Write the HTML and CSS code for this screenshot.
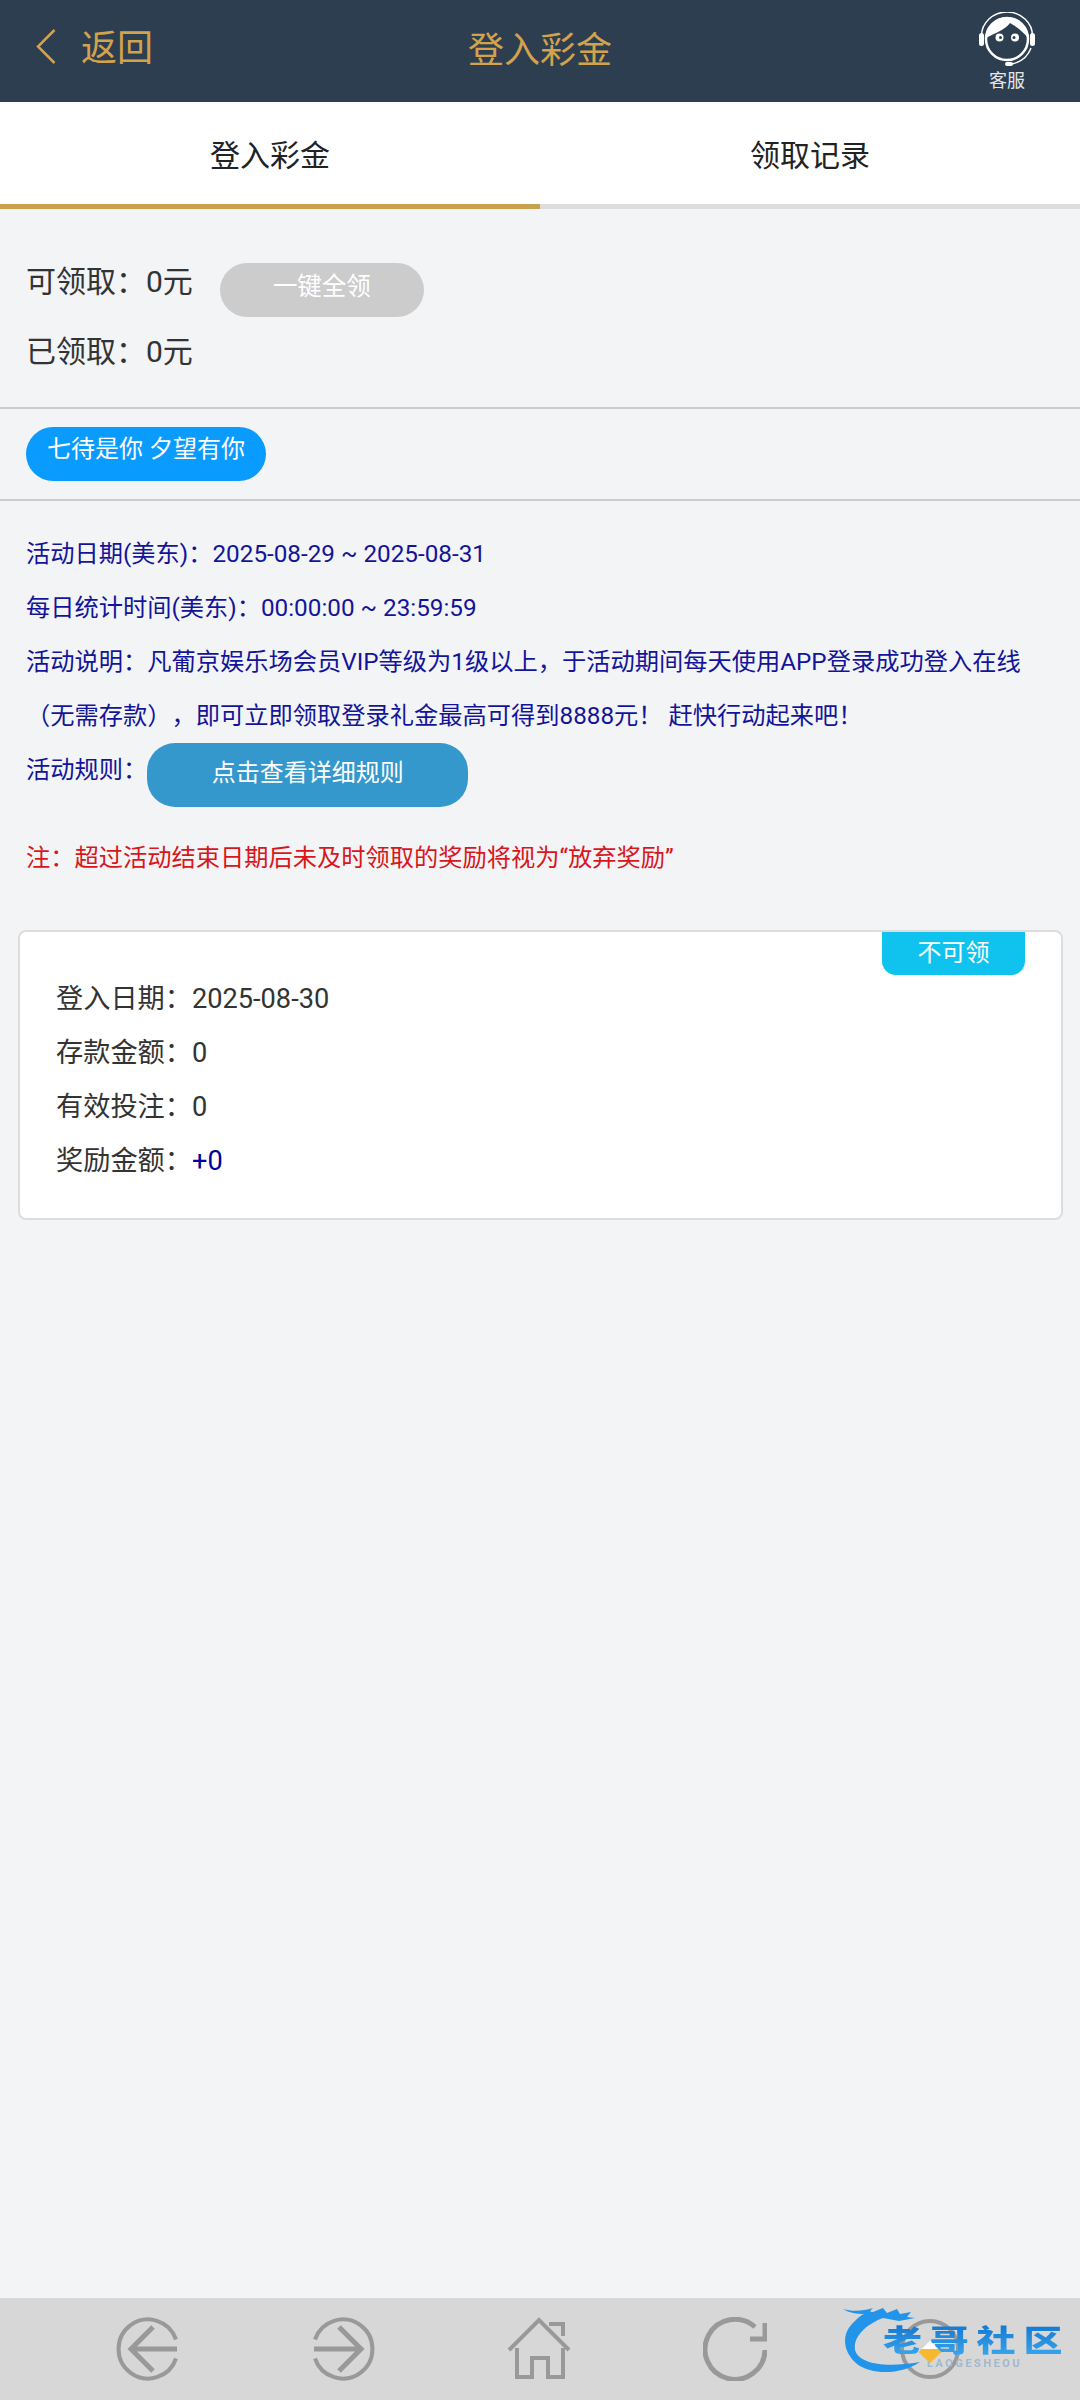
FILE: index.html
```html
<!DOCTYPE html>
<html lang="zh-CN">

<head>
    <meta charset="UTF-8">
    <meta name="viewport" content="width=device-width, initial-scale=1.0">
    <title>登入彩金</title>
    <link rel="stylesheet" href="styles.css">
</head>

<body>
    <header class="top-bar">
        <a class="back-link">
            <svg class="back-icon" viewBox="0 0 20 35">
                <path d="M18.500 1 L2 17.500 L18.500 34" />
            </svg>
            <span>返回</span>
        </a>
        <h1 class="page-title">登入彩金</h1>
        <a class="service-link">
            <svg class="service-icon" viewBox="0 0 56 56">
                <path class="thin" d="M2.500 24 A25.500 24 0 0 1 53.500 24" />
                <rect class="solid" x="0" y="21" width="5" height="13" rx="2.500" />
                <rect class="solid" x="51" y="21" width="5" height="13" rx="2.500" />
                <path class="solid" d="M7 26 A21 21 0 0 1 49 26 C44 20 38 15 31 11 C26 18 16 21 7 26 Z" />
                <circle class="ring" cx="28" cy="27" r="21" />
                <circle class="solid" cx="20.500" cy="25.500" r="4" />
                <circle class="solid" cx="36" cy="25.500" r="4" />
                <circle class="dark" cx="21.500" cy="25.500" r="1.500" />
                <circle class="dark" cx="35" cy="25.500" r="1.500" />
                <path class="thin" d="M52 36 C49 44 42 50 33 52" />
                <rect class="solid" x="26" y="50" width="8" height="4" rx="2" />
            </svg>
            <span>客服</span>
        </a>
    </header>

    <nav class="tabs">
        <a class="tab tab-active">登入彩金</a>
        <a class="tab">领取记录</a>
    </nav>

    <section class="summary">
        <div class="summary-row">
            <span>可领取：0元</span>
            <button class="claim-btn" type="button">一键全领</button>
        </div>
        <div class="summary-row">
            <span>已领取：0元</span>
        </div>
    </section>

    <section class="promo">
        <span class="promo-pill">七待是你 夕望有你</span>
    </section>

    <section class="info">
        <p>活动日期(美东)：2025-08-29 ~ 2025-08-31</p>
        <p>每日统计时间(美东)：00:00:00 ~ 23:59:59</p>
        <p>活动说明：凡葡京娱乐场会员VIP等级为1级以上，于活动期间每天使用APP登录成功登入在线（无需存款），即可立即领取登录礼金最高可得到8888元！ 赶快行动起来吧！</p>
        <div class="rule-row">
            <span>活动规则：</span>
            <button class="rule-btn" type="button">点击查看详细规则</button>
        </div>
        <p class="notice">注：超过活动结束日期后未及时领取的奖励将视为“放弃奖励”</p>
    </section>

    <section class="record-card">
        <span class="record-badge">不可领</span>
        <p>登入日期：2025-08-30</p>
        <p>存款金额：0</p>
        <p>有效投注：0</p>
        <p>奖励金额：<span class="bonus">+0</span></p>
    </section>

    <footer class="bottom-bar">
        <svg class="nav-icon" viewBox="0 0 64 64">
            <path d="M60 22.500 A29.500 29.500 0 1 0 60 41.500" />
            <path class="heavy" d="M37 10 L15 32 L37 54 M15 32 H61" />
        </svg>
        <svg class="nav-icon" viewBox="0 0 64 64">
            <path d="M4 22.500 A29.500 29.500 0 1 1 4 41.500" />
            <path class="heavy" d="M28 10 L50 32 L28 54 M50 32 H3" />
        </svg>
        <svg class="nav-icon" viewBox="0 0 64 64">
            <path d="M2 33 L32 3 L62 33 M42 7 H56 V19" />
            <path d="M10 31 V60 H25 V41 H41 V60 H56 V31" />
        </svg>
        <svg class="nav-icon" viewBox="0 0 64 64">
            <path class="heavy" d="M62 33 A30 30 0 1 1 52 10" />
            <path class="heavy" d="M62 6 V22 H47" />
        </svg>
        <svg class="nav-icon" viewBox="0 0 64 64">
            <circle cx="32" cy="32" r="28" />
        </svg>

        <div class="watermark">
            <svg class="watermark-dragon" viewBox="0 0 90 70">
                <path d="M0 3 C10 6 20 5 30 2 C27 5 26 6 30 6 L40 2 L44 7 L54 3 L57 8 L68 6 L64 11 L72 12 L56 15 L40 12 C24 18 10 30 12 44 C16 58 42 62 77 56 C60 68 30 70 14 58 C0 46 -3 28 12 15 C16 11 18 9 21 8 C14 8 6 7 0 3 Z" />
            </svg>
            <span class="watermark-name">老哥社区</span>
            <span class="watermark-sub">LAOGESHEOU</span>
            <span class="watermark-spark"></span>
        </div>
    </footer>
</body>

</html>
```

FILE: styles.css
```css
* {
    box-sizing: border-box;
}

body {
    margin: 0;
    width: 1080px;
    min-height: 2400px;
    display: flex;
    flex-direction: column;
    font-family: Roboto, "Noto Sans CJK SC", sans-serif;
    text-spacing-trim: space-all;
    background-color: #f2f4f6;
    color: #333;
}

p {
    margin: 0;
}

button {
    border: none;
    color: #fff;
    font-family: inherit;
    font-size: 24px;
}

/* top bar */
.top-bar {
    height: 102px;
    display: grid;
    grid-template-columns: 1fr auto 1fr;
    background-color: #2c3e50;
    color: #d2a24c;
}

.back-link {
    height: 90px;
    padding-left: 36px;
    display: flex;
    align-items: center;
    gap: 25px;
    font-size: 36px;
}

.back-icon {
    width: 20px;
    height: 35px;
    margin-top: 2px;
    fill: none;
    stroke: #d2a24c;
    stroke-width: 2.5;
}

.page-title {
    margin: 0;
    font-size: 36px;
    font-weight: 400;
    line-height: 102px;
}

.service-link {
    justify-self: end;
    padding: 12px 45px 0 0;
    display: flex;
    flex-direction: column;
    align-items: center;
    color: #e4e6e8;
    font-size: 18px;
    line-height: 26px;
}

.service-icon {
    width: 56px;
    height: 56px;
}

.service-icon .thin {
    fill: none;
    stroke: #fff;
    stroke-width: 1.5;
}

.service-icon .ring {
    fill: none;
    stroke: #fff;
    stroke-width: 2.5;
}

.service-icon .solid {
    fill: #fff;
}

.service-icon .dark {
    fill: #2c3e50;
}

/* tabs */
.tabs {
    display: flex;
    background-color: #fff;
}

.tab {
    flex: 1;
    height: 107px;
    border-bottom: 5px solid #ddd;
    color: #222;
    font-size: 30px;
    line-height: 108px;
    text-align: center;
}

.tab-active {
    border-bottom-color: #c9a04d;
}

/* claim summary */
.summary {
    padding: 38px 26px 20px;
    border-bottom: 2px solid #ccc;
    font-size: 30px;
}

.summary-row {
    display: flex;
    align-items: flex-start;
    line-height: 70px;
}

.claim-btn {
    width: 204px;
    height: 54px;
    margin: 16px 0 0 27px;
    padding: 0 0 12px;
    border-radius: 27px;
    background-color: #ccc;
    font-size: 24.500px;
}

/* promo */
.promo {
    padding: 18px 26px;
    border-bottom: 2px solid #ccc;
}

.promo-pill {
    display: block;
    width: 240px;
    height: 54px;
    border-radius: 27px;
    background-color: #0a9bff;
    color: #fff;
    font-size: 24px;
    line-height: 45px;
    text-align: center;
}

/* rules */
.info {
    padding: 26px 20px 0 26px;
    color: #14149a;
    font-size: 24.250px;
    line-height: 54px;
}

.rule-row {
    display: flex;
    align-items: flex-start;
}

.rule-btn {
    width: 321px;
    height: 64px;
    padding: 0 0 10px;
    border-radius: 28px;
    background-color: #3498cc;
}

.notice {
    margin-top: 24px;
    color: #d9161b;
}

/* record card */
.record-card {
    position: relative;
    margin: 45px 17px 0 18px;
    padding: 40px 36px 30px;
    border: 2px solid #ddd;
    border-radius: 8px;
    background-color: #fff;
    font-size: 27.200px;
    line-height: 54px;
}

.record-badge {
    position: absolute;
    top: 0;
    right: 36px;
    width: 143px;
    height: 43px;
    border-radius: 0 0 14px 14px;
    background-color: #0fc3ee;
    color: #fff;
    font-size: 24px;
    line-height: 43px;
    text-align: center;
}

.bonus {
    color: #0000a0;
}

/* bottom nav */
.bottom-bar {
    position: relative;
    height: 102px;
    margin-top: auto;
    padding: 0 52px 0 50px;
    display: grid;
    grid-template-columns: repeat(5, 1fr);
    align-items: center;
    justify-items: center;
    background-color: #d7d7d7;
}

.nav-icon {
    width: 64px;
    height: 64px;
    fill: none;
    stroke: #999;
    stroke-width: 4;
}

.nav-icon .heavy {
    stroke-width: 5;
}

.watermark {
    position: absolute;
    top: 8px;
    left: 843px;
    width: 225px;
    height: 80px;
    filter: blur(0.6px);
}

.watermark-dragon {
    position: absolute;
    top: 0;
    left: 0;
    width: 90px;
    height: 70px;
    fill: #2294ea;
}

.watermark-name {
    position: absolute;
    top: 19px;
    left: 40px;
    width: 140px;
    background: linear-gradient(#1478d2, #3aa8ee);
    -webkit-background-clip: text;
    background-clip: text;
    color: transparent;
    font-size: 30px;
    font-weight: 900;
    letter-spacing: 6px;
    line-height: 32px;
    white-space: nowrap;
    transform: scaleX(1.3);
    transform-origin: left center;
}

.watermark-sub {
    position: absolute;
    top: 52px;
    left: 84px;
    color: #9fb8cc;
    font-size: 11px;
    font-weight: 700;
    letter-spacing: 2.500px;
    line-height: 12px;
}

.watermark-spark {
    position: absolute;
    top: 38px;
    left: 79px;
    width: 16px;
    height: 16px;
    background: linear-gradient(135deg, #fff 35%, #f5b82e 35%);
    transform: rotate(45deg);
}
```
